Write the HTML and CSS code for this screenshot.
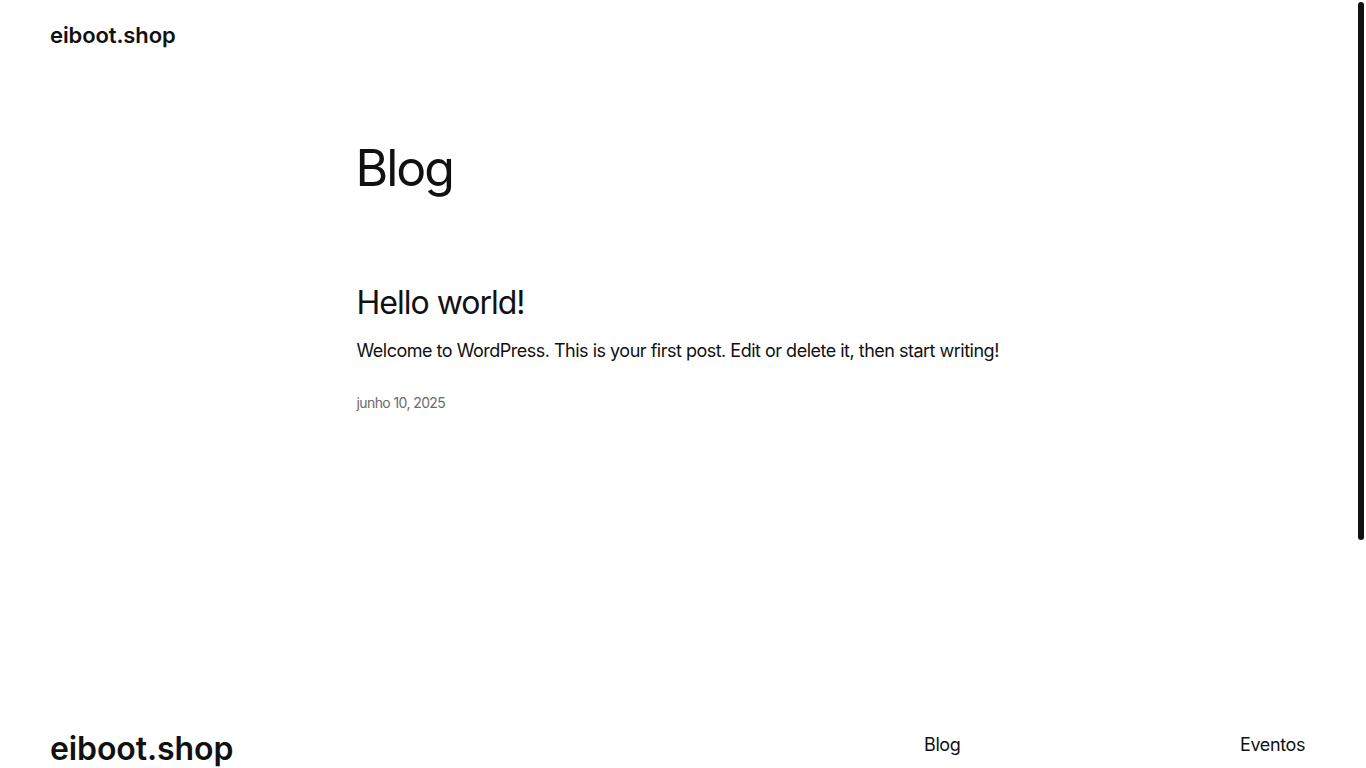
FILE: index.html
```html
<!DOCTYPE html>
<html lang="pt-BR">
<head>
<meta charset="utf-8">
<title>Blog – eiboot.shop</title>
<link rel="stylesheet" href="styles.css">
</head>
<body>
<header class="site-header">
  <a class="site-title" href="#">eiboot.shop</a>
</header>
<main class="main">
  <h1 class="page-title">Blog</h1>
  <article class="post">
    <h2 class="post-title"><a href="#">Hello world!</a></h2>
    <p class="post-excerpt">Welcome to WordPress. This is your first post. Edit or delete it, then start writing!</p>
    <div class="post-date">junho 10, 2025</div>
  </article>
</main>
<footer class="site-footer">
  <div class="footer-top">
    <a class="footer-title" href="#">eiboot.shop</a>
    <nav class="footer-nav">
      <ul class="nav-col">
        <li><a href="#">Blog</a></li>
        <li><a href="#">Sobre</a></li>
        <li><a href="#">FAQs</a></li>
        <li><a href="#">Autores</a></li>
      </ul>
      <ul class="nav-col">
        <li><a href="#">Eventos</a></li>
        <li><a href="#">Loja</a></li>
        <li><a href="#">Padrões</a></li>
        <li><a href="#">Temas</a></li>
      </ul>
    </nav>
  </div>
  <div class="footer-sep"></div>
  <div class="footer-bottom">
    <span>Twenty Twenty-Five</span>
    <span>Desenvolvido com <a href="#">WordPress</a></span>
  </div>
</footer>
<div class="scroll-thumb" aria-hidden="true"></div>
</body>
</html>
```
FILE: styles.css
```css
html {
  background: #fff;
}
body {
  margin: 0;
  padding-right: 8px;
  font-family: Inter, "Noto Sans", sans-serif;
  color: #111;
  background: #fff;
}
a {
  color: inherit;
  text-decoration: none;
}
.scroll-thumb {
  position: fixed;
  top: 2px;
  right: 2px;
  width: 6px;
  height: 538px;
  background: #111;
  border-radius: 3px;
}
.site-header {
  padding: 22px 50px 0;
  height: 48px;
}
.site-title {
  display: inline-block;
  font-size: 22px;
  line-height: 26px;
  font-weight: 600;
  letter-spacing: -0.1px;
}
.main {
  width: 645px;
  margin: 0 auto;
  padding-top: 68px;
}
.page-title {
  margin: 0 0 0 -1px;
  font-size: 50px;
  font-weight: 400;
  letter-spacing: -2px;
  line-height: 60px;
}
.post {
  margin-top: 86px;
}
.post-title {
  margin: 0;
  font-size: 32px;
  font-weight: 400;
  letter-spacing: -1px;
  line-height: 38.4px;
}
.post-excerpt {
  margin: 16px 0 0;
  font-size: 18px;
  letter-spacing: -0.5px;
  line-height: 25.2px;
  font-weight: 400;
  white-space: nowrap;
}
.post-date {
  margin-top: 29px;
  font-size: 14px;
  line-height: 20px;
  color: #6b6b6b;
  letter-spacing: -0.6px;
}
.site-footer {
  padding: 318px 53px 121px 50px;
}
.footer-top {
  display: flex;
  justify-content: space-between;
  align-items: flex-start;
}
.footer-title {
  display: block;
  font-size: 32px;
  font-weight: 600;
  letter-spacing: -0.1px;
  line-height: 32px;
  padding-top: 2px;
}
.footer-nav {
  display: flex;
  width: 381px;
  justify-content: space-between;
  margin-top: 1px;
}
.nav-col {
  list-style: none;
  margin: 0;
  padding: 0;
  display: flex;
  flex-direction: column;
  gap: 18px;
  font-size: 18px;
  line-height: 25.2px;
  letter-spacing: -0.4px;
}
.nav-col:last-child {
  align-items: flex-end;
}
.footer-sep {
  height: 1px;
  background: #ddd;
  margin: 60px 0 24px;
}
.footer-bottom {
  display: flex;
  justify-content: space-between;
  font-size: 14px;
  line-height: 20px;
  color: #111;
}
.footer-bottom a {
  text-decoration: underline;
}
```
